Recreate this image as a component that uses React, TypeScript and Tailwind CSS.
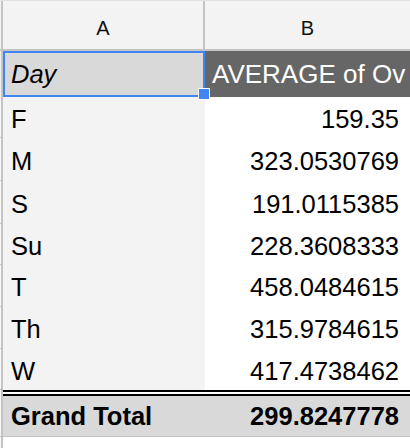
import React from 'react';

const ROWS = [
  { day: 'F', avg: '159.35', h: 'h-[41px]' },
  { day: 'M', avg: '323.0530769', h: 'h-[43px]' },
  { day: 'S', avg: '191.0115385', h: 'h-[43px]' },
  { day: 'Su', avg: '228.3608333', h: 'h-[41px]' },
  { day: 'T', avg: '458.0484615', h: 'h-[42px]' },
  { day: 'Th', avg: '315.9784615', h: 'h-[42px]' },
  { day: 'W', avg: '417.4738462', h: 'h-[41px]' },
];

const font = { fontFamily: '"Liberation Sans", Arial, sans-serif' };

export default function App() {
  return (
    <div className="w-[410px] h-[448px] overflow-hidden bg-white text-black" style={font}>
      {/* column letters */}
      <div className="flex h-[51px] bg-[#f3f3f3] border-b-2 border-[#c4c4c4] border-t border-t-[#e2e2e2]">
        <div className="w-[3px] border-r-2 border-[#c4c4c4]" />
        <div className="w-[202px] border-r-2 border-[#c4c4c4] flex items-center justify-center pt-[6px] text-[20px] text-[#111]">
          A
        </div>
        <div className="flex-1 flex items-center justify-center pt-[6px] text-[20px] text-[#111]">B</div>
      </div>

      {/* pivot header */}
      <div className="flex h-[46px]">
        <div className="w-[3px] border-r-2 border-[#c4c4c4] bg-[#f3f3f3]" />
        <div className="relative w-[202px] bg-[#d9d9d9] border-2 border-[#4285f4] flex items-center pl-[6px] text-[25.5px] italic">
          Day
          <div className="absolute right-[-7px] bottom-[-5px] w-[12px] h-[12px] bg-[#4285f4] border border-white z-10" />
        </div>
        <div className="flex-1 bg-[#666666] text-white flex items-center pl-[7px] text-[26px] whitespace-nowrap overflow-hidden">
          AVERAGE of Ov
        </div>
      </div>

      {/* data rows */}
      {ROWS.map(r => (
        <div key={r.day} className={`flex ${r.h}`}>
          <div className="w-[3px] border-r-2 border-[#c4c4c4] border-b border-b-[#c4c4c4] bg-[#f8f8f8]" />
          <div className="w-[202px] bg-[#f3f3f3] flex items-center pl-[8px] pt-[3px] text-[25.5px]">{r.day}</div>
          <div className="flex-1 flex items-center justify-end pr-[11px] pt-[3px] text-[25.5px]">{r.avg}</div>
        </div>
      ))}

      {/* double rule */}
      <div className="flex">
        <div className="w-[3px] border-r-2 border-[#c4c4c4] bg-[#f8f8f8]" />
        <div className="flex-1 h-[6px] border-y-2 border-black bg-white" />
      </div>

      {/* grand total */}
      <div className="flex h-[41px] border-b border-[#c4c4c4]">
        <div className="w-[3px] border-r-2 border-[#c4c4c4] bg-[#f8f8f8]" />
        <div className="flex-1 bg-[#d9d9d9] flex items-center justify-between pl-[8px] pr-[11px] text-[25.5px] font-bold">
          <span>Grand Total</span>
          <span>299.8247778</span>
        </div>
      </div>

      <div className="flex h-[20px]">
        <div className="w-[3px] border-r-2 border-[#c4c4c4] bg-[#f8f8f8]" />
      </div>
    </div>
  );
}
